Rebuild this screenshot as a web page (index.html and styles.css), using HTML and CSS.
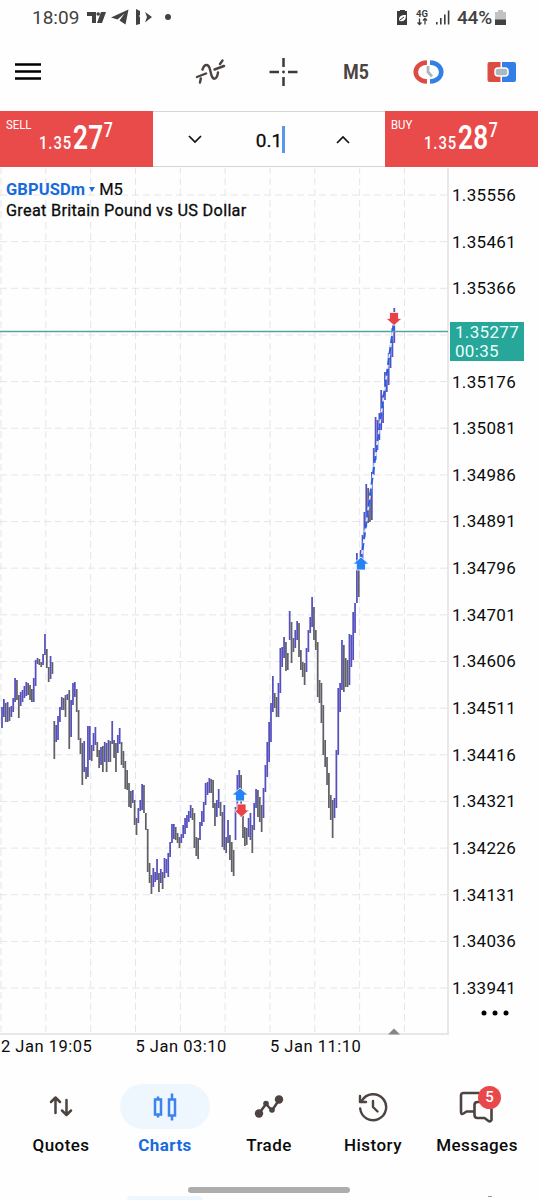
FILE: index.html
```
<!DOCTYPE html>
<html lang="en">
<head>
    <meta charset="UTF-8">
    <meta name="viewport" content="width=device-width, initial-scale=1.0">
    <title>GBPUSDm M5</title>
    <link rel="stylesheet" href="styles.css">
</head>
<body>
    <div class="screen">
        <div class="status-bar">
            <span class="clock">18:09</span>
            <svg class="status-left" width="88" height="20" viewBox="0 0 88 20" fill="#424242">
                <path d="M0 4h9v11H5V8H0zM14 4h5l-4 11h-5z"/><circle cx="11.2" cy="6" r="1.8"/>
                <path d="M24 9.500 41.500 1.500l-3 15-6-4 5-7-7 6z"/>
                <path d="M49 1l4 2v4l-1 1 1 1v7l-4 1z"/><path d="M58 4l7 5-7 5.500 2-5.500z"/>
                <circle cx="81" cy="9" r="3"/>
            </svg>
            <svg class="status-right" width="54" height="20" viewBox="0 0 54 20" fill="#3c3c3c">
                <path d="M3 3h1V2h5v1h2v14H1V3z"/>
                <path d="M3 12c0-5 4-5 7-5 0 5-2 7-6 6" fill="#fff"/>
                <path d="M4 12l4-3" stroke="#3c3c3c"/>
                <text class="net" x="20" y="9">4G</text>
                <path d="M23.500 10.500v6m-2-2 2 2 2-2M29 16.500v-6m-2 2 2-2 2 2" fill="none" stroke="#3c3c3c" stroke-width="1.3"/>
                <path d="M40 14h1.600v2.500H40zM44 10h1.600v6.500H44zM48 6.500h1.600v10h-1.600zM51.800 2.500h1.600v14h-1.600z"/>
            </svg>
            <span class="percent">44%</span>
            <svg width="12" height="17" viewBox="0 0 12 17">
                <path d="M3 3V1h5v2h3v8H0V3z" fill="#c2c2c2"/>
                <path d="M0 10.500h11V16H0z" fill="#424242"/>
            </svg>
        </div>

        <div class="toolbar">
            <svg class="menu" width="27" height="20" viewBox="0 0 27 20">
                <path d="M0 2.500h26M0 9.500h26M0 16.500h26" stroke="#000" stroke-width="2.7"/>
            </svg>
            <svg class="tool" width="30" height="26" viewBox="0 0 30 26" fill="none" stroke="#4b4340" stroke-width="2.400" stroke-linecap="round">
                <path d="M1.500 18 10.500 14.500M19 10.500 28.500 7M4.500 23.500l.8-4M7 10.500c2-6 6-6 7.500 0l1.500 6c2 5 5.500 4 6.500-3M24.500 5l2.500-3.500"/>
            </svg>
            <svg class="tool" width="28" height="28" viewBox="0 0 28 28" stroke="#3d3a38" stroke-width="2.500">
                <path d="M14 0v9M14 19v9M0 14h9.500M18.500 14H28"/><circle cx="14" cy="14" r="1.400" fill="#3d3a38" stroke="none"/>
            </svg>
            <span class="period">M5</span>
            <svg class="tool" width="30" height="26" viewBox="0 0 30 26" fill="none">
                <path d="M13.500 3.500C-1.500 4-1.500 22 13.500 22.500" stroke="#dc4c42" stroke-width="4.600"/>
                <path d="M16.500 3.500C31.500 4 31.500 22 16.500 22.500" stroke="#337fe5" stroke-width="4.600"/>
                <path d="M14.500 7v6l4 4.500" stroke="#aab8bf" stroke-width="2.800"/>
            </svg>
            <svg class="tool" width="30" height="22" viewBox="0 0 30 22">
                <path d="M2.500 1h11v20h-11a2 2 0 0 1-2-2V3a2 2 0 0 1 2-2z" fill="#dc4c42"/>
                <path d="M15 1h12a2 2 0 0 1 2 2v16a2 2 0 0 1-2 2H15z" fill="#337fe5"/>
                <rect x="8" y="7" width="13" height="8" rx="3" fill="#aab8bf" stroke="#fff" stroke-width="1.500"/>
            </svg>
        </div>

        <div class="trade-bar">
            <div class="deal">
                <span class="deal-label">SELL</span>
                <div class="deal-price">1.35<b>27</b><sup>7</sup></div>
            </div>
            <div class="volume">
                <svg width="14" height="9" viewBox="0 0 14 9"><path d="M1 1l6 6 6-6" fill="none" stroke="#111" stroke-width="1.700"/></svg>
                <div class="lot">0.1</div>
                <svg width="14" height="9" viewBox="0 0 14 9"><path d="M1 8l6-6 6 6" fill="none" stroke="#111" stroke-width="1.700"/></svg>
            </div>
            <div class="deal">
                <span class="deal-label">BUY</span>
                <div class="deal-price">1.35<b>28</b><sup>7</sup></div>
            </div>
        </div>

        <div class="chart">
            <svg class="plot" id="plot" width="449" height="868" viewBox="0 168 449 868"></svg>
            <div class="symbol">
                <div><b>GBPUSDm</b><i></i>M5</div>
                <div class="symbol-name">Great Britain Pound vs US Dollar</div>
            </div>
            <div class="scale">
                <div>1.35556</div>
                <div>1.35461</div>
                <div>1.35366</div>
                <div class="current"><span>1.35277<br>00:35</span></div>
                <div>1.35176</div>
                <div>1.35081</div>
                <div>1.34986</div>
                <div>1.34891</div>
                <div>1.34796</div>
                <div>1.34701</div>
                <div>1.34606</div>
                <div>1.34511</div>
                <div>1.34416</div>
                <div>1.34321</div>
                <div>1.34226</div>
                <div>1.34131</div>
                <div>1.34036</div>
                <div>1.33941</div>
                <svg class="more" width="28" height="6" viewBox="0 0 28 6"><circle cx="3" cy="3" r="2.500"/><circle cx="14" cy="3" r="2.500"/><circle cx="25" cy="3" r="2.500"/></svg>
            </div>
        </div>
        <div class="times">
            <span>2 Jan 19:05</span>
            <span>5 Jan 03:10</span>
            <span>5 Jan 11:10</span>
        </div>

        <div class="nav">
            <div class="nav-item">
                <div class="nav-icon">
                    <svg width="26" height="24" viewBox="0 0 26 24" fill="none" stroke="#4d4341" stroke-width="2.500" stroke-linecap="round" stroke-linejoin="round">
                        <path d="M7.500 18V3M3 7l4.500-4.500L12 7M18.500 5v14M14 15.500l4.500 4.500L23 15.500"/>
                    </svg>
                </div>
                <span>Quotes</span>
            </div>
            <div class="nav-item active">
                <div class="nav-icon">
                    <svg width="26" height="28" viewBox="0 0 26 28" fill="none" stroke="#3d82f0" stroke-width="2.500">
                        <path d="M3 6.500h6v15H3zM6 3.500v3M6 21.500v3M17 6.500h6v16h-6zM20 0.500v6M20 22.500v5"/>
                    </svg>
                </div>
                <span>Charts</span>
            </div>
            <div class="nav-item">
                <div class="nav-icon">
                    <svg width="30" height="24" viewBox="0 0 30 24" fill="#4d4341">
                        <path d="M5 18.500 12 9l6 6.500L25 5" fill="none" stroke="#4d4341" stroke-width="2.500"/>
                        <circle cx="5" cy="18.500" r="4.200"/><circle cx="12" cy="8.500" r="2.800"/><circle cx="18" cy="15" r="2.800"/><circle cx="25" cy="4.500" r="4.200"/>
                    </svg>
                </div>
                <span>Trade</span>
            </div>
            <div class="nav-item">
                <div class="nav-icon">
                    <svg width="30" height="30" viewBox="0 0 30 30" fill="none" stroke="#4d4341" stroke-width="2.400" stroke-linecap="round" stroke-linejoin="round">
                        <path d="M2.200 16.500A13 13 0 1 0 4 8.500M2 4v6h6M15 9v6l4.500 4.500"/>
                    </svg>
                </div>
                <span>History</span>
            </div>
            <div class="nav-item">
                <div class="nav-icon">
                    <svg width="36" height="34" viewBox="0 0 36 34" fill="none" stroke="#4d4341" stroke-width="2.600" stroke-linejoin="round" stroke-linecap="round">
                        <path d="M20 3H4.500Q2 3 2 5.500V22q0 3 2.500 1.500l3-2H15M32.500 19v11q-1 2-3 1l-4-3h-7q-3 0-3-3V15q0-3 3-3h3"/>
                    </svg>
                    <span class="badge">5</span>
                </div>
                <span>Messages</span>
            </div>
        </div>
        <div class="home-bar"></div>
        <div class="edge"><i></i><b></b></div>
    </div>

    <script>
        // high / low of every bar, in chart units
        const bars = [
            [707,728],[699,717],[703,722],[702,722],[707,721],[706,717],[698,712],[678,702],[680,700],[695,718],
            [692,706],[690,702],[686,698],[682,696],[683,695],[685,700],[689,702],[678,702],[660,686],[658,664],
            [659,665],[662,667],[654,665],[634,655],[649,668],[667,682],[656,679],[662,674],[721,759],[725,742],
            [716,740],[707,722],[697,710],[698,710],[695,717],[694,700],[690,749],[700,737],[683,705],[682,697],
            [689,712],[710,740],[738,754],[743,785],[741,772],[767,779],[726,777],[726,760],[745,761],[733,751],
            [727,745],[742,757],[750,768],[747,765],[746,772],[742,762],[743,772],[740,762],[741,762],[721,744],
            [740,758],[743,772],[735,753],[728,744],[742,765],[751,768],[761,789],[770,790],[783,807],[791,808],
            [790,803],[800,825],[818,835],[808,823],[800,811],[784,810],[785,813],[813,830],[829,872],[863,883],
            [875,894],[868,887],[872,882],[859,880],[873,892],[869,883],[872,889],[858,878],[859,873],[853,877],
            [842,857],[824,843],[824,839],[827,840],[833,843],[837,848],[834,843],[825,838],[818,834],[815,828],
            [811,822],[805,818],[808,820],[813,848],[837,856],[838,859],[822,840],[811,826],[802,822],[783,805],
            [782,795],[778,793],[779,793],[780,808],[803,826],[800,817],[789,808],[802,816],[812,847],[805,850],
            [837,853],[820,843],[835,860],[842,872],[850,876],[807,840],[775,810],[770,800],[775,817],[815,838],
            [827,846],[828,845],[818,837],[813,840],[825,853],[803,830],[789,808],[790,817],[797,822],[805,832],
            [788,818],[765,792],[742,777],[722,762],[703,742],[676,712],[693,708],[697,717],[683,717],[648,693],
            [647,667],[637,658],[642,671],[653,670],[611,640],[622,663],[638,652],[630,648],[621,640],[623,657],
            [650,670],[662,677],[663,685],[648,672],[630,652],[617,633],[597,627],[607,640],[630,650],[642,697],
            [680,703],[683,723],[705,755],[740,767],[757,785],[773,808],[795,820],[800,838],[798,818],[750,808],
            [688,755],[683,712],[640,690],[645,692],[658,687],[660,687],[634,685],[635,667],[612,660],[603,633],
            [553,603],[560,597],[550,568],[535,560],[512,537],[484,527],[488,523],[493,522],[472,520],[448,475],
            [417,460],[420,450],[413,440],[390,430],[395,423],[372,400],[373,392],[353,385],[345,368],[328,357],
            [308,343]
        ];
        const step = 1.868;
        const line = (cls, x1, y1, x2, y2) => `<line class="${cls}" x1="${x1}" y1="${y1}" x2="${x2}" y2="${y2}"/>`;
        let html = '';

        for (let i = 0; i < 10; i++) {
            const x = 1 + i * 44.83;
            html += line('grid', x, 167, x, 1034);
        }
        for (let i = 0; i < 18; i++) {
            const y = 195 + i * 46.65;
            html += line('grid', 0, y, 448, y);
        }
        html += line('frame', 448, 167, 448, 1034) + line('frame', 0, 1034, 449, 1034);

        bars.forEach(([high, low], i) => {
            const prev = bars[i - 1] || [720, 735];
            const up = high + low < prev[0] + prev[1];
            const x = 2 + i * step;
            html += line(up ? 'bar up' : 'bar down', x, high, x, low);
        });

        html += line('deal-gap', 361, 561, 393.5, 325) + line('deal-line', 361, 561, 393.5, 325);
        html += line('bid', 0, 331.5, 448, 331.5);

        const arrow = (x, y, cls, turn) =>
            `<path class="arrow ${cls}" transform="translate(${x} ${y}) rotate(${turn})" d="M0-7 8 0H4.500V6H-4.500V0H-8z"/>`;
        html += arrow(240, 795, 'buy', 0) + arrow(241.5, 810, 'sell', 180);
        html += arrow(361, 564, 'buy', 0) + arrow(394, 318.5, 'sell', 180);
        html += '<path class="marker" d="M388 1034.500l6-6 6 6z"/>';

        document.getElementById('plot').innerHTML = html;
    </script>
</body>
</html>
```
FILE: styles.css
```
* {
    margin: 0;
    padding: 0;
    box-sizing: border-box;
}

body {
    font-family: Roboto, "Liberation Sans", sans-serif;
    background: #fefefe;
    color: #0b0b0b;
}

svg {
    display: block;
    flex: none;
}

.screen {
    width: 538px;
    height: 1200px;
    overflow: hidden;
    display: flex;
    flex-direction: column;
}

/* status bar */
.status-bar {
    height: 36px;
    flex: none;
    display: flex;
    align-items: center;
    padding: 0 31px 1px 32px;
    color: #424242;
    font-size: 19px;
}

.clock {
    width: 55px;
}

.status-right {
    margin-left: auto;
    margin-right: 7px;
}

.net {
    font-size: 9.5px;
    font-weight: 700;
}

.percent {
    width: 38px;
    font-size: 19px;
    font-weight: 500;
    letter-spacing: -0.2px;
    white-space: nowrap;
}

/* toolbar */
.toolbar {
    height: 75px;
    flex: none;
    display: flex;
    align-items: center;
    padding: 0 21px 3px 15px;
}

.menu {
    margin-right: 132px;
}

.toolbar .tool,
.period {
    width: 73px;
}

.toolbar .tool:last-child {
    width: 30px;
    margin-left: 22px;
}

.period {
    color: #4b4340;
    font-size: 21px;
    font-weight: 700;
    text-align: center;
    transform: scaleX(0.84);
}

/* one click trading */
.trade-bar {
    height: 56px;
    flex: none;
    display: grid;
    grid-template-columns: 153px 232px 153px;
}

.deal {
    position: relative;
    background: #e94b4b;
    color: #fff;
}

.deal-label {
    position: absolute;
    left: 6px;
    top: 5px;
    font-size: 13.5px;
    transform: scaleX(0.84);
    transform-origin: 0 0;
}

.deal-price {
    display: flex;
    align-items: baseline;
    padding: 9px 0 0 39px;
    font-size: 19px;
    font-weight: 500;
    line-height: 36px;
    letter-spacing: 1.2px;
    transform: scaleX(0.78);
    transform-origin: 39px 0;
}

.deal-price b {
    margin-left: 1px;
    font-size: 33.5px;
    font-weight: 600;
    letter-spacing: 0.6px;
}

.deal-price sup {
    font-size: 20.5px;
    line-height: 1;
    position: relative;
    top: -12px;
}

.volume {
    display: flex;
    align-items: center;
    justify-content: space-between;
    padding: 0 35px;
    border-top: 1px solid #d5d5d5;
    border-bottom: 1px solid #d5d5d5;
}

.lot {
    height: 27px;
    line-height: 29px;
    margin-left: 3px;
    font-size: 19px;
    border-right: 3px solid #5a97ec;
    -webkit-text-stroke: 0.3px #0b0b0b;
}

/* chart */
.chart {
    position: relative;
    height: 868px;
    flex: none;
    display: flex;
}

.plot {
    margin-top: 1px;
}

.symbol {
    position: absolute;
    left: 6px;
    top: 12px;
    font-size: 16.5px;
    line-height: 21px;
    -webkit-text-stroke: 0.2px;
}

.symbol b {
    color: #176bdc;
    font-weight: 700;
    letter-spacing: 0.1px;
    -webkit-text-stroke: 0;
}

.symbol-name {
    font-size: 16.3px;
    font-weight: 400;
    letter-spacing: 0.28px;
    -webkit-text-stroke: 0.3px #0b0b0b;
}

.symbol i {
    display: inline-block;
    margin: 0 4px 3px;
    border: 3px solid transparent;
    border-top: 5px solid #176bdc;
    border-bottom: 0;
}

.scale {
    padding: 5px 0 0 3px;
    font-size: 17px;
    letter-spacing: 0.32px;
}

.scale div {
    height: 46.65px;
    line-height: 46.65px;
}

.scale .current {
    line-height: 19px;
    padding-top: 10px;
}

.current span {
    display: block;
    width: 74px;
    height: 39px;
    margin-left: -2px;
    padding: 1px 0 0 5px;
    background: #27a69a;
    color: #e9fffc;
}

.more {
    margin: -2px 0 0 29px;
}

.grid {
    stroke: #e6e6e6;
    stroke-dasharray: 7 4;
}

.frame {
    stroke: #e0e0e0;
    stroke-width: 1.5;
}

.bar {
    stroke-width: 1.75;
}

.bar.up {
    stroke: #5550be;
}

.bar.down {
    stroke: #606068;
}

.deal-gap {
    stroke: #e4ecff;
    stroke-width: 1.6;
}

.deal-line {
    stroke: #235fe6;
    stroke-width: 2;
    stroke-dasharray: 7 4;
}

.bid {
    stroke: #54a49e;
    stroke-width: 1.4;
}

.arrow {
    stroke: #fff;
    stroke-width: 0.8;
}

.buy {
    fill: #2583f5;
}

.sell {
    fill: #e9414a;
}

.marker {
    fill: #858585;
}

.times {
    display: flex;
    height: 36px;
    flex: none;
    font-size: 16.5px;
    letter-spacing: 0.5px;
    line-height: 23px;
    padding-left: 1px;
}

.times span {
    width: 134.5px;
}

/* bottom navigation */
.nav {
    display: grid;
    grid-template-columns: repeat(5, 104px);
    padding: 13px 0 0 9px;
    height: 116px;
    flex: none;
}

.nav-item {
    display: flex;
    flex-direction: column;
    align-items: center;
    font-size: 17px;
    font-weight: 500;
    letter-spacing: 0.45px;
}

.nav-icon {
    position: relative;
    width: 90px;
    height: 45px;
    margin-bottom: 6px;
    border-radius: 23px;
    display: flex;
    align-items: center;
    justify-content: center;
}

.active {
    color: #176bdc;
    font-weight: 700;
}

.active .nav-icon {
    background: #eff7fe;
}

.badge {
    position: absolute;
    left: 46px;
    top: 2px;
    width: 23px;
    height: 23px;
    border-radius: 50%;
    background: #e9484b;
    color: #fff;
    font-size: 15px;
    line-height: 23px;
    text-align: center;
    letter-spacing: 0;
}

.home-bar {
    width: 162px;
    height: 6px;
    flex: none;
    margin-left: 188px;
    border-radius: 3px;
    background: #adadad;
}

.edge {
    display: flex;
    align-items: flex-end;
    height: 7px;
    flex: none;
    padding-left: 127px;
}

.edge i {
    width: 76px;
    height: 4px;
    background: #eff7fe;
    border-radius: 10px 10px 0 0;
}

.edge b {
    width: 4px;
    height: 1px;
    margin: 0 0 3px 285px;
    background: #999;
}
```
